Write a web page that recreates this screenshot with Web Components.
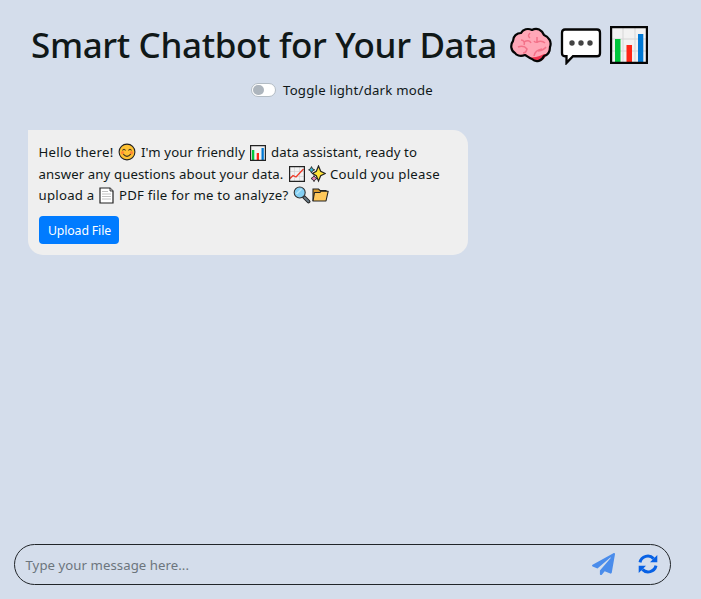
<!DOCTYPE html>
<html lang="en"><head><meta charset="utf-8"><title>Smart Chatbot for Your Data</title>
<style>
html,body{margin:0;height:100%;background:#d4ddeb}
body{font-family:"Noto Sans","Open Sans",sans-serif;color:#101818;overflow:hidden}
</style></head><body>
<chat-app></chat-app>
<script>
const icons={
brain:['0 0 42 36','<path d="M3 14C3 9 7 6 11 6C13 2 18 1 22 3C27 0 32 3 34 8C39 10 42 15 40 20C40 25 38 28 34 29C32 34 26 36 22 32C19 31 17 29 15 28C10 30 6 28 5 26C1 24 0 18 3 14Z" fill="#ffa7b7"/><path d="M21 30C25 31 30 29 34 27L37 27C34 33 31 35 26 34Z" fill="#ef334e"/><path d="M11 13C14 13 15 16 14 18M14 15Q19 12 21 16M8 20Q14 18 17 22Q16 26 13 26M20 6Q17 9 20 11M27 10V15Q32 13 35 16M28 15Q25 16 24 14M24 29Q25 23 32 22M28 24Q34 23 36 20" fill="none" stroke="#f37289" stroke-width="1.5"/><path d="M3 14C3 9 7 6 11 6C13 2 18 1 22 3C27 0 32 3 34 8C39 10 42 15 40 20C40 25 38 28 34 29C32 34 26 36 22 32C19 31 17 29 15 28C10 30 6 28 5 26C1 24 0 18 3 14Z" fill="none" stroke="#050505" stroke-width="2.2" stroke-linejoin="round"/>'],
chat:['0 0 42 36','<path d="M5 1.5H37Q40 1.5 40 4.5V24.5Q40 27.5 37 27.5H13L6.5 34V27.5H5Q2 27.5 2 24.5V4.500Q2 1.500 5 1.500Z" fill="#fff" stroke="#050505" stroke-width="2.300"/><g fill="#434343"><circle cx="12" cy="14.500" r="2.700"/><circle cx="21" cy="14.500" r="2.700"/><circle cx="30" cy="14.500" r="2.700"/></g>'],
bars:['0 0 38 38','<path d="M1 1H37V37H1Z" fill="#f2f2f2"/><path d="M2 13H36M2 25H36M13 2V36M25 2V36" stroke="#d6d6d6"/><path d="M5 13H10.500V36H5Z" fill="#00c63b"/><path d="M16.500 19H22V36H16.500Z" fill="#ff2515"/><path d="M28 8H33.300V36H28Z" fill="#0078d4"/><path d="M1.100 1.100H36.900V36.900H1.100Z" fill="none" stroke="#050505" stroke-width="2.200"/>'],
smile:['0 0 18 18','<circle cx="9" cy="9" r="7.900" fill="#ffc233" stroke="#222" stroke-width="1.100"/><circle cx="4.500" cy="9.800" r="1.700" fill="#ff8a35"/><circle cx="13.500" cy="9.800" r="1.700" fill="#ff8a35"/><path d="M4.500 7.500Q6 5 7.500 7.500M10.500 7.500Q12 5 13.500 7.500M5.300 11.200Q9 15.500 12.700 11.200" fill="none" stroke="#3d3321" stroke-width="1.050"/>'],
minibars:['0 0 16 16','<path d="M.6 .6H15.400V15.400H.6Z" fill="#f2f2f2"/><path d="M2 5H4.300V15H2Z" fill="#00c63b"/><path d="M6.700 8H9V15H6.700Z" fill="#ff2515"/><path d="M11.500 3H13.800V15H11.500Z" fill="#0078d4"/><path d="M.6 .6H15.400V15.400H.6Z" fill="none" stroke="#222" stroke-width="1.200"/>'],
line:['0 0 16 16','<path d="M.6 .6H15.400V15.400H.6Z" fill="#f2f2f2"/><path d="M1 5.500H15M1 10.500H15M5.500 1V15M10.500 1V15" stroke="#ccc" stroke-width=".6"/><path d="M1 12.500L4 9.500L7 11L14.500 3" fill="none" stroke="#f03a28" stroke-width="1.300"/><path d="M.6 .6H15.400V15.400H.6Z" fill="none" stroke="#222" stroke-width="1.200"/>'],
spark:['0 0 18 18','<path d="M10.500 1L12.700 6.300L17.300 8.500L12.700 10.700L10.500 16L8.300 10.700L4.500 8.500L8.300 6.300Z" fill="#ffe338" stroke="#222" stroke-width="1.200"/><path d="M3.500 1.600L4.500 3.800L6.700 4.800L4.500 5.800L3.500 8L2.500 5.800L.6 4.800L2.500 3.800Z" fill="#38bddb" stroke="#222" stroke-width=".9"/><path d="M6 10.500L7.100 12.400L9 13.500L7.100 14.600L6 16.600L4.900 14.600L3 13.500L4.900 12.400Z" fill="#ed86ba" stroke="#222" stroke-width=".9"/>'],
doc:['0 0 15 17','<path d="M1 1H11L14 4V16H1Z" fill="#fff" stroke="#222" stroke-width="1.200"/><path d="M11 1V4H14" fill="#ccc" stroke="#222" stroke-width=".8"/><path d="M3 4.500H9M3 7H12M3 9.500H12M3 12H12" stroke="#bbb" stroke-width=".9"/>'],
mag:['0 0 18 18','<path d="M10 10L15.500 15.500" stroke="#222" stroke-width="3.800" stroke-linecap="round"/><path d="M11.500 11.500L15.400 15.400" stroke="#687985" stroke-width="2" stroke-linecap="round"/><circle cx="6.700" cy="6.500" r="5.500" fill="#83cff3" stroke="#333" stroke-width="1.100"/><path d="M3.500 8L8.500 3" stroke="#b8e5f8" stroke-width="1.600"/>'],
folder:['0 0 17 14','<path d="M1 13V1H6.500L8 2.500H14V5" fill="#da9b2c" stroke="#222" stroke-width="1.100"/><path d="M1 13L2.500 4.500H8L9 3.200H16.200L14 13Z" fill="#ffc85b" stroke="#222" stroke-width="1.100" stroke-linejoin="round"/>'],
plane:['0 0 512 512','<path fill="#4a8ceb" d="M476 3.200L12.500 270.600c-18.100 10.400-15.800 35.600 2.200 43.200L121 358.400l287.300-253.200c5.500-4.900 13.300 2.600 8.600 8.300L176 407v80.500c0 23.600 28.500 32.900 42.500 15.800L282 426l124.600 52.200c14.200 6 30.400-2.900 33-18.200l72-432C515 7.800 493.300-6.800 476 3.200z"/>'],
sync:['0 0 20 20','<path d="M2 8.300A8 8 0 0 1 15.600 4.600M18 11.700A8 8 0 0 1 4.400 15.400" fill="none" stroke="#0761e5" stroke-width="3"/><path fill="#0761e5" d="M19.300 1V8.300H12ZM.7 19V11.700H8Z"/>']};
class GlyphIcon extends HTMLElement{connectedCallback(){const i=icons[this.getAttribute('name')];
this.attachShadow({mode:'open'}).innerHTML=`<style>:host{display:block;flex:none}svg{display:block;width:100%;height:100%}</style><svg viewBox="${i[0]}" preserveAspectRatio="none" aria-hidden="true">${i[1]}</svg>`;
this.style.width=this.getAttribute('w')+'px';this.style.height=this.getAttribute('h')+'px'}}
/* Tracks a single line of text out to the width given in its "w" attribute. */
class FitText extends HTMLElement{connectedCallback(){this.attachShadow({mode:'open'}).innerHTML='<style>:host{display:block;flex:none;white-space:nowrap}span{display:inline-block}</style><span><slot></slot></span>';
const s=this.shadowRoot.querySelector('span'),w=+this.getAttribute('w'),n=this.textContent.length;
s.style.letterSpacing=(w-s.getBoundingClientRect().width)/n+'px';this.style.width=w+'px'}}
class PageHeader extends HTMLElement{connectedCallback(){this.attachShadow({mode:'open'}).innerHTML=`<style>
:host{display:block;height:130px;box-sizing:border-box;padding:21px 0 0 31px}
h1{margin:0;height:48px;display:flex;align-items:center;font-size:35px;font-weight:500;line-height:48px}
.row{display:flex;align-items:center;height:22px;margin:10px 0 0 220px;gap:7px;font-size:13.200px;line-height:22px}
.sw{box-sizing:border-box;width:25px;height:14px;border:1px solid #b3bcc4;border-radius:7px;background:#fff;display:flex;align-items:center;padding-left:1px}
.sw i{width:10.500px;height:10.500px;border-radius:50%;background:#adb5bd}
</style><h1><fit-text w="466">Smart Chatbot for Your Data</fit-text><glyph-icon name="brain" w="42" h="36" style="margin-left:13px"></glyph-icon><glyph-icon name="chat" w="42" h="37" style="margin:2px 0 0 8px"></glyph-icon><glyph-icon name="bars" w="38" h="38" style="margin:0 0 0 8px"></glyph-icon></h1>
<div class="row"><span class="sw"><i></i></span><fit-text w="150">Toggle light/dark mode</fit-text></div>`}}
class ChatMessage extends HTMLElement{connectedCallback(){this.attachShadow({mode:'open'}).innerHTML=`<style>
:host{display:block;box-sizing:border-box;width:440px;height:125px;margin-left:28px;background:#efefef;border-radius:0 15px 15px 15px;padding:12px 10px 0;font-size:13.200px}
.l{display:flex;align-items:center;height:21.500px;line-height:21.500px}
.l glyph-icon{margin-top:-1px}
button{display:block;margin:9px 0 0 1px;width:80px;height:28px;border:0;border-radius:4px;background:#007bff;color:#fff;font:12.300px/29px "Noto Sans",sans-serif;padding:0 0 0 9px;text-align:left}
</style>
<div class="l"><fit-text w="75" style="margin-left:.5px">Hello there!</fit-text><glyph-icon name="smile" w="18" h="18" style="margin:-1px 5px 0 4.500px"></glyph-icon><fit-text w="104">I'm your friendly</fit-text><glyph-icon name="minibars" w="16" h="16" style="margin:0 5px 0 5px"></glyph-icon><fit-text w="146">data assistant, ready to</fit-text></div>
<div class="l"><fit-text w="245" style="margin-left:.5px">answer any questions about your data.</fit-text><glyph-icon name="line" w="16" h="16" style="margin:-1px 3px 0 5.500px"></glyph-icon><glyph-icon name="spark" w="18" h="18" style="margin-right:4px"></glyph-icon><fit-text w="110">Could you please</fit-text></div>
<div class="l"><fit-text w="56" style="margin-left:.5px">upload a</fit-text><glyph-icon name="doc" w="15" h="17" style="margin:-1px 5px 0 4.500px"></glyph-icon><fit-text w="169.500">PDF file for me to analyze?</fit-text><glyph-icon name="mag" w="18" h="18" style="margin:-1px 1px 0 4.500px"></glyph-icon><glyph-icon name="folder" w="17" h="14"></glyph-icon></div>
<button><fit-text w="63">Upload File</fit-text></button>`}}
class MessageBar extends HTMLElement{connectedCallback(){this.attachShadow({mode:'open'}).innerHTML=`<style>
:host{display:flex;align-items:center;box-sizing:border-box;width:657px;height:41px;margin:auto 0 14px 14px;border:1px solid #212529;border-radius:21px;padding:0 12px 0 10.500px;font-size:13.200px;color:#6c757d}
.sp{flex:1}</style><fit-text w="163.500">Type your message here...</fit-text><span class="sp"></span><glyph-icon name="plane" w="23" h="22" style="margin:-2px 23px 0 0"></glyph-icon><glyph-icon name="sync" w="20" h="20" style="margin-top:-1px"></glyph-icon>`}}
class ChatApp extends HTMLElement{connectedCallback(){this.attachShadow({mode:'open'}).innerHTML=`<style>:host{display:flex;flex-direction:column;height:599px}</style><page-header></page-header><chat-message></chat-message><message-bar></message-bar>`}}
customElements.define('glyph-icon',GlyphIcon);customElements.define('fit-text',FitText);customElements.define('page-header',PageHeader);customElements.define('chat-message',ChatMessage);customElements.define('message-bar',MessageBar);customElements.define('chat-app',ChatApp);
</script></body></html>
